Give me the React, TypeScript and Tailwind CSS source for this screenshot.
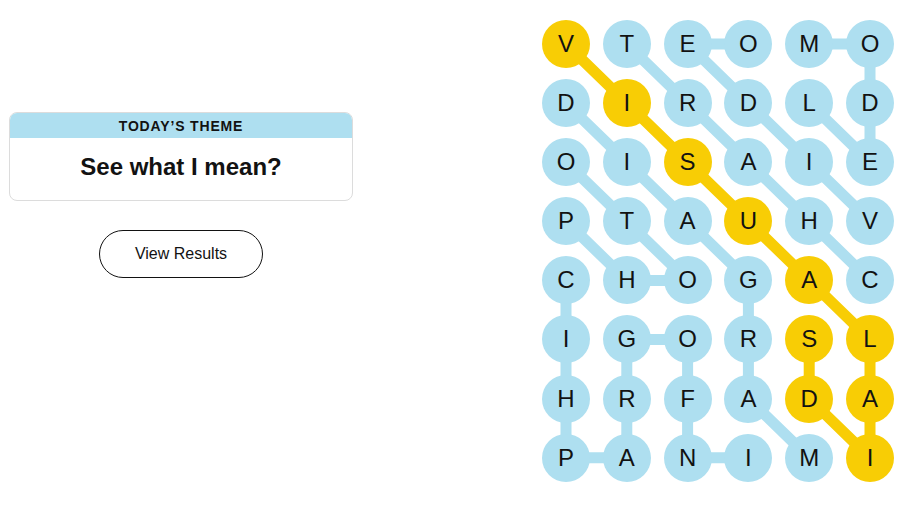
const GRID = [
  "VTEOMO",
  "DIRDLD",
  "OISAIE",
  "PTAUHV",
  "CHOGAC",
  "IGORSL",
  "HRFADA",
  "PANIMI",
];

type Cell = [number, number];

// found words, as chains of [row, col]
const WORDS: Cell[][] = [
  [[3, 5], [2, 4], [1, 3], [0, 2], [0, 3]],
  [[4, 5], [3, 4], [2, 3], [1, 2], [0, 1]],
  [[0, 4], [0, 5], [1, 5], [2, 5], [1, 4]],
  [[3, 0], [4, 1], [4, 2], [3, 1], [2, 0]],
  [[1, 0], [2, 1], [3, 2], [4, 3], [5, 3], [6, 3], [7, 4]],
  [[7, 3], [7, 2], [6, 2], [5, 2], [5, 1], [6, 1], [7, 1], [7, 0], [6, 0], [5, 0], [4, 0]],
];

const SPANGRAM: Cell[] = [
  [0, 0], [1, 1], [2, 2], [3, 3], [4, 4], [5, 5], [6, 5], [7, 5], [6, 4], [5, 4],
];

const BLUE = "#aedff0";
const YELLOW = "#f8cd05";
const COL = 60.8;
const ROW = 59.1;
const R = 24;

const cx = (c: number) => R + c * COL;
const cy = (r: number) => R + r * ROW;

const inSpangram = (r: number, c: number) =>
  SPANGRAM.some(([sr, sc]) => sr === r && sc === c);

function Chain({ cells, color }: { cells: Cell[]; color: string }) {
  return (
    <polyline
      points={cells.map(([r, c]) => `${cx(c)},${cy(r)}`).join(" ")}
      fill="none"
      stroke={color}
      strokeWidth={11}
      strokeLinejoin="round"
    />
  );
}

function Board() {
  return (
    <div className="relative">
      <svg
        className="absolute inset-0"
        width={352}
        height={462}
        viewBox="0 0 352 462"
      >
        {WORDS.map((w, i) => (
          <Chain key={i} cells={w} color={BLUE} />
        ))}
        <Chain cells={SPANGRAM} color={YELLOW} />
      </svg>
      <div className="relative grid grid-cols-[repeat(6,48px)] gap-x-[12.8px] gap-y-[11.1px]">
        {GRID.flatMap((row, r) =>
          row.split("").map((ch, c) => (
            <div
              key={`${r}-${c}`}
              className={`grid h-12 w-12 place-items-center rounded-full text-[24px] leading-none text-[#121212] ${
                inSpangram(r, c) ? "bg-[#f8cd05]" : "bg-[#aedff0]"
              }`}
            >
              {ch}
            </div>
          ))
        )}
      </div>
    </div>
  );
}

function ThemePanel() {
  return (
    <div className="flex flex-col items-center">
      <div className="w-[344px] overflow-hidden rounded-lg border border-[#dcdcdc]">
        <div className="flex h-[25px] items-center justify-center bg-[#aedff0] pt-px text-[14px] font-semibold tracking-[0.06em] text-[#121212]">
          TODAY’S THEME
        </div>
        <div className="flex h-[62px] items-center justify-center pb-[4px] text-[24px] font-bold text-[#121212]">
          See what I mean?
        </div>
      </div>
      <button className="mt-[29px] h-[48px] w-[164px] rounded-full border border-[#121212] bg-white text-[16px] text-[#121212]">
        View Results
      </button>
    </div>
  );
}

export default function App() {
  return (
    <div
      className="flex h-[508px] w-[904px] bg-white"
      style={{ fontFamily: '"Liberation Sans", Arial, sans-serif' }}
    >
      <div className="ml-[9px] mt-[112px]">
        <ThemePanel />
      </div>
      <div className="ml-[189px] mt-[20px]">
        <Board />
      </div>
    </div>
  );
}
